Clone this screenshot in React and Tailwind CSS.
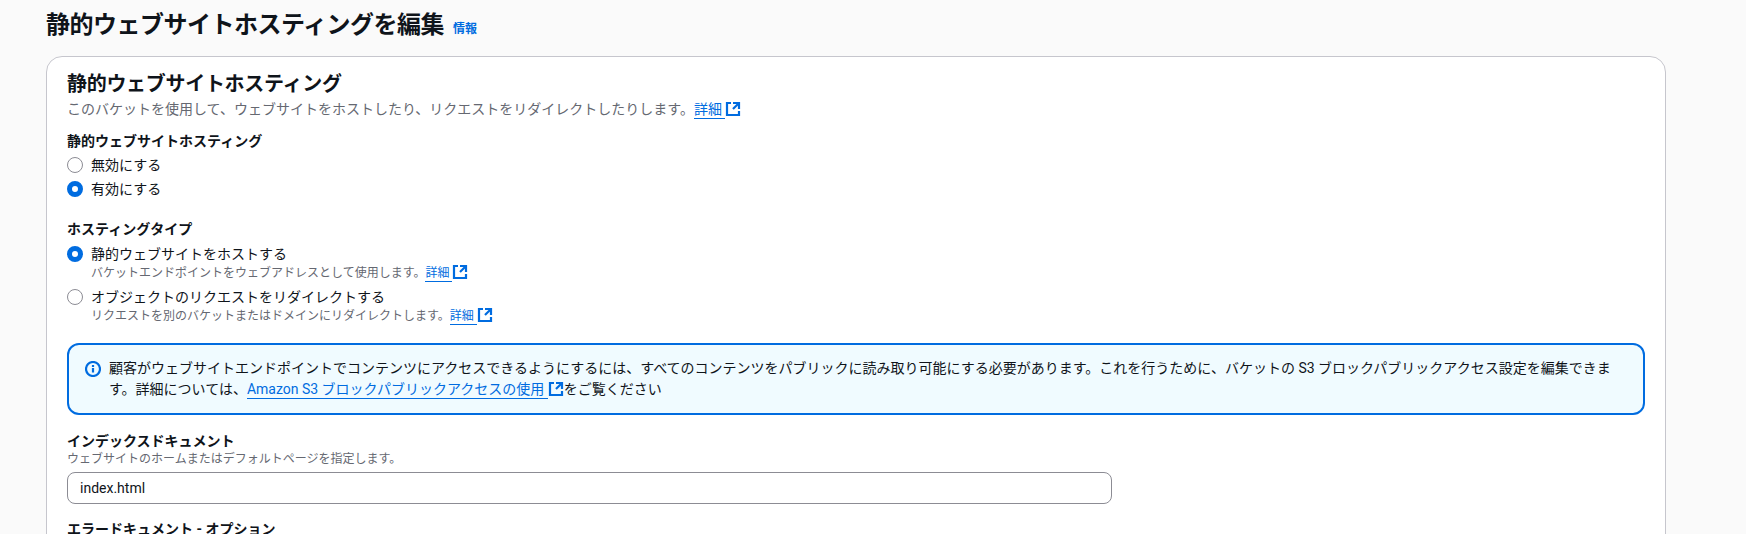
import React from "react";

const FONT = "font-['Roboto','Noto_Sans_CJK_JP',sans-serif]";

function ExternalIcon() {
  return (
    <svg viewBox="0 0 16 16" fill="none" stroke="currentColor" strokeWidth="2.2" className="inline-block w-4 h-4 align-[-3px] text-[#006ce0]">
      <path d="M14 8.01v-6H8" />
      <path d="M14.02 2 8 8" />
      <path d="M6 2H2v12h12v-4" />
    </svg>
  );
}

function ExtLink({ children }) {
  return (
    <a className="text-[#006ce0] whitespace-nowrap">
      <span className="border-b border-[#006ce0] pb-px">{children}&nbsp;</span>
      <ExternalIcon />
    </a>
  );
}

function Radio({ checked, label, children }) {
  return (
    <div className="flex gap-[8px]">
      <span
        className={
          checked
            ? "mt-[2px] w-4 h-4 shrink-0 rounded-full bg-white border-[5px] border-[#006ce0]"
            : "mt-[2px] w-4 h-4 shrink-0 rounded-full bg-white border border-[#8c8c94]"
        }
      />
      <div>
        <div className="text-sm leading-5 text-[#0f141a]">{label}</div>
        {children && <div className="text-xs leading-4 text-[#656871]">{children}</div>}
      </div>
    </div>
  );
}

export default function App() {
  return (
    <div className={`h-screen overflow-hidden bg-[#fafafa] pl-[46px] pr-[80px] ${FONT}`}>
      {/* page title */}
      <div className="flex items-baseline gap-[9px] pt-[9px] h-[56px]">
        <h1 className="text-2xl leading-[32px] font-bold tracking-[-0.5px] text-[#0f141a]">静的ウェブサイトホスティングを編集</h1>
        <a className="text-xs font-bold text-[#006ce0]">情報</a>
      </div>

      <div className="bg-white border border-[#c6c6cd] rounded-2xl pl-5 pr-5 pt-[15px] pb-10">
        <h2 className="text-xl leading-6 font-bold tracking-[-0.3px] text-[#0f141a]">静的ウェブサイトホスティング</h2>
        <p className="text-sm leading-5 mt-[3px] text-[#656871]">
          このバケットを使用して、ウェブサイトをホストしたり、リクエストをリダイレクトしたりします。<ExtLink>詳細</ExtLink>
        </p>

        <div className="mt-[12px]">
          <label className="block text-sm leading-5 font-bold text-[#0f141a]">静的ウェブサイトホスティング</label>
          <div className="mt-[4px] flex flex-col gap-[4px]">
            <Radio label="無効にする" />
            <Radio checked label="有効にする" />
          </div>
        </div>

        <div className="mt-[20px]">
          <label className="block text-sm leading-5 font-bold text-[#0f141a]">ホスティングタイプ</label>
          <div className="mt-[5px] flex flex-col gap-[6px]">
            <Radio checked label="静的ウェブサイトをホストする">
              バケットエンドポイントをウェブアドレスとして使用します。<ExtLink>詳細</ExtLink>
            </Radio>
            <Radio label="オブジェクトのリクエストをリダイレクトする">
              リクエストを別のバケットまたはドメインにリダイレクトします。<ExtLink>詳細</ExtLink>
            </Radio>
          </div>
        </div>

        <div className="mt-[19px] flex gap-[8px] bg-[#f0fbff] border-2 border-[#006ce0] rounded-xl pl-[16px] pr-[18px] pt-[13px] pb-[13px] text-sm leading-[21px] text-[#0f141a]">
          <svg viewBox="0 0 16 16" fill="none" stroke="#006ce0" strokeWidth="2.2" className="w-4 h-4 mt-[3px] shrink-0">
            <circle cx="8" cy="8" r="7" />
            <path d="M8 11.5V7M8 6V4" />
          </svg>
          <p>
            顧客がウェブサイトエンドポイントでコンテンツにアクセスできるようにするには、すべてのコンテンツをパブリックに読み取り可能にする必要があります。これを行うために、バケットの S3 ブロックパブリックアクセス設定を編集できます。詳細については、<ExtLink>Amazon S3 ブロックパブリックアクセスの使用</ExtLink>をご覧ください
          </p>
        </div>

        <div className="mt-[16px]">
          <label className="block text-sm leading-5 font-bold text-[#0f141a]">インデックスドキュメント</label>
          <div className="text-xs leading-4 text-[#656871]">ウェブサイトのホームまたはデフォルトページを指定します。</div>
          <input
            readOnly
            value="index.html"
            className="mt-[5px] block w-[1045px] h-[32px] px-3 text-sm text-[#0f141a] bg-white border border-[#8c8c94] rounded-lg outline-none"
          />
        </div>

        <div className="mt-[15px]">
          <label className="block text-sm leading-5 font-bold text-[#0f141a]">エラードキュメント - オプション</label>
        </div>
      </div>
    </div>
  );
}
